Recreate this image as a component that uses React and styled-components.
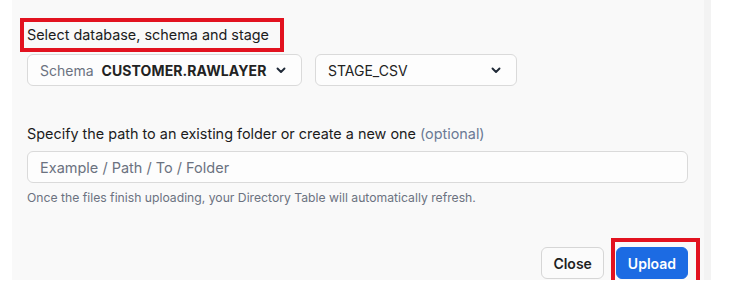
import React from 'react';
import styled, { createGlobalStyle } from 'styled-components';

const GlobalStyle = createGlobalStyle`
  html, body {
    margin: 0;
    padding: 0;
    background: #fff;
    font-family: Inter, "Noto Sans", sans-serif;
  }
`;

const Page = styled.div`
  width: 739px;
  height: 304px;
  background: #fff;
`;

const Frame = styled.div`
  display: flex;
  margin-left: 12px;
  height: 280px;
  overflow: hidden;
`;

const Panel = styled.div`
  width: 692px;
  background: #f9f9f9;
  display: flex;
  flex-direction: column;
`;

const Gutter = styled.div`
  width: 7px;
  background: #f3f3f3;
`;

const Body = styled.div`
  padding: 18px 15px 0 15px;
  display: flex;
  flex-direction: column;
`;

const Highlight = styled.div`
  align-self: flex-start;
  margin-left: -7px;
  border: 4px solid #e2121f;
  padding: 3px 11px 3px 3px;
  font-size: 14.4px;
  color: #1c1c1c;
  line-height: 20px;
`;

const SelectRow = styled.div`
  display: flex;
  gap: 13px;
  margin-top: 2px;
`;

const Select = styled.div`
  width: ${p => p.$w}px;
  height: 32px;
  box-sizing: border-box;
  border: 1px solid #dadada;
  border-radius: 6px;
  background: #fdfdfd;
  display: flex;
  align-items: center;
  padding: 0 15px 0 12px;
  font-size: 14px;
  color: #222;
`;

const Prefix = styled.span`
  color: #6b7280;
  margin-right: 8px;
`;

const Value = styled.span`
  font-weight: ${p => (p.$bold ? 700 : 400)};
  flex: 1;
  letter-spacing: ${p => (p.$bold ? '0.1px' : '0')};
`;

const Chevron = () => (
  <svg width="10" height="7" viewBox="0 0 10 7" fill="none">
    <path d="M1.5 1.5L5 5L8.5 1.5" stroke="#1f2937" strokeWidth="1.9" strokeLinecap="round" strokeLinejoin="round" />
  </svg>
);

const FieldLabel = styled.div`
  margin-top: 38px;
  font-size: 14.4px;
  color: #1c1c1c;
  line-height: 20px;
`;

const Optional = styled.span`
  color: #6b7a95;
`;

const PathInput = styled.input`
  margin-top: 7px;
  width: 661px;
  height: 32px;
  box-sizing: border-box;
  border: 1px solid #dadada;
  border-radius: 6px;
  background: #fdfdfd;
  padding: 0 12px;
  font-family: inherit;
  font-size: 14.5px;
  color: #222;
  outline: none;
  &::placeholder {
    color: #6b7280;
  }
`;

const Help = styled.div`
  margin-top: 7px;
  font-size: 12.2px;
  color: #6b7280;
  line-height: 16px;
`;

const Divider = styled.div`
  margin-top: 25px;
  height: 1px;
  background: #dcdcdc;
`;

const Footer = styled.div`
  display: flex;
  justify-content: flex-end;
  align-items: flex-start;
  gap: 12px;
  padding: 16px 16px 0 0;
`;

const Button = styled.button`
  height: 32px;
  box-sizing: border-box;
  padding: 0 ${p => (p.$primary ? 11 : 11)}px;
  border-radius: 6px;
  font-family: inherit;
  font-size: 14px;
  font-weight: 600;
  border: 1px solid ${p => (p.$primary ? '#1c6be3' : '#d6d6d6')};
  background: ${p => (p.$primary ? '#1c6be3' : '#fbfbfb')};
  color: ${p => (p.$primary ? '#fff' : '#1f1f1f')};
  cursor: pointer;
`;

const Marked = styled.div`
  margin: -9px -12px 0 -5px;
  border: 4px solid #e2121f;
  padding: 5px 8px 20px 1px;
`;

export default function App() {
  return (
    <Page>
      <GlobalStyle />
      <Frame>
        <Panel>
          <Body>
            <Highlight>Select database, schema and stage</Highlight>
            <SelectRow>
              <Select $w={275}>
                <Prefix>Schema</Prefix>
                <Value $bold>CUSTOMER.RAWLAYER</Value>
                <Chevron />
              </Select>
              <Select $w={202}>
                <Value>STAGE_CSV</Value>
                <Chevron />
              </Select>
            </SelectRow>
            <FieldLabel>
              Specify the path to an existing folder or create a new one <Optional>(optional)</Optional>
            </FieldLabel>
            <PathInput placeholder="Example / Path / To / Folder" />
            <Help>Once the files finish uploading, your Directory Table will automatically refresh.</Help>
          </Body>
          <Divider />
          <Footer>
            <Button>Close</Button>
            <Marked>
              <Button $primary>Upload</Button>
            </Marked>
          </Footer>
        </Panel>
        <Gutter />
      </Frame>
    </Page>
  );
}
